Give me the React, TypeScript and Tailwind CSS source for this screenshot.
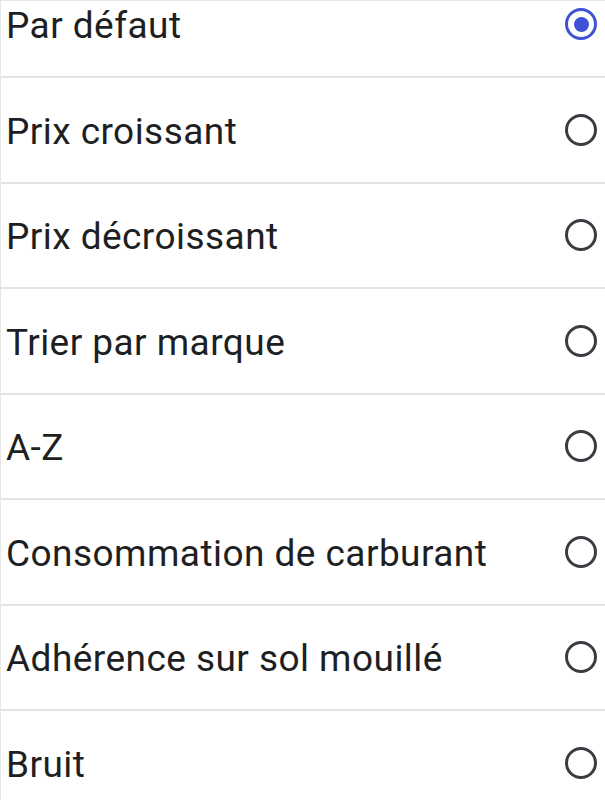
import React from "react";

const options = [
  "Par défaut",
  "Prix croissant",
  "Prix décroissant",
  "Trier par marque",
  "A-Z",
  "Consommation de carburant",
  "Adhérence sur sol mouillé",
  "Bruit",
];

export default function App() {
  const selected = 0;
  return (
    <div
      className="h-[800px] w-[605px] overflow-hidden bg-white border-l border-t border-[#e6e6e6]"
      style={{ fontFamily: "Roboto, 'Noto Sans', sans-serif" }}
    >
      <div className="-mt-[28.5px]">
        {options.map((label, i) => (
          <div
            key={label}
            className="flex h-[105.5px] items-center justify-between border-b-2 border-[#e3e3e3] pl-[5px] pr-[8px]"
          >
            <span className="pt-[3px] text-[37px] leading-none tracking-[0.45px] text-[#1e1f22]">{label}</span>
            {i === selected ? (
              <span className="flex h-[32px] w-[32px] items-center justify-center rounded-full border-[3px] border-[#3f51d4]">
                <span className="h-[15px] w-[15px] rounded-full bg-[#3f51d4]" />
              </span>
            ) : (
              <span className="h-[32px] w-[32px] rounded-full border-[3px] border-[#3b3c42]" />
            )}
          </div>
        ))}
      </div>
    </div>
  );
}
